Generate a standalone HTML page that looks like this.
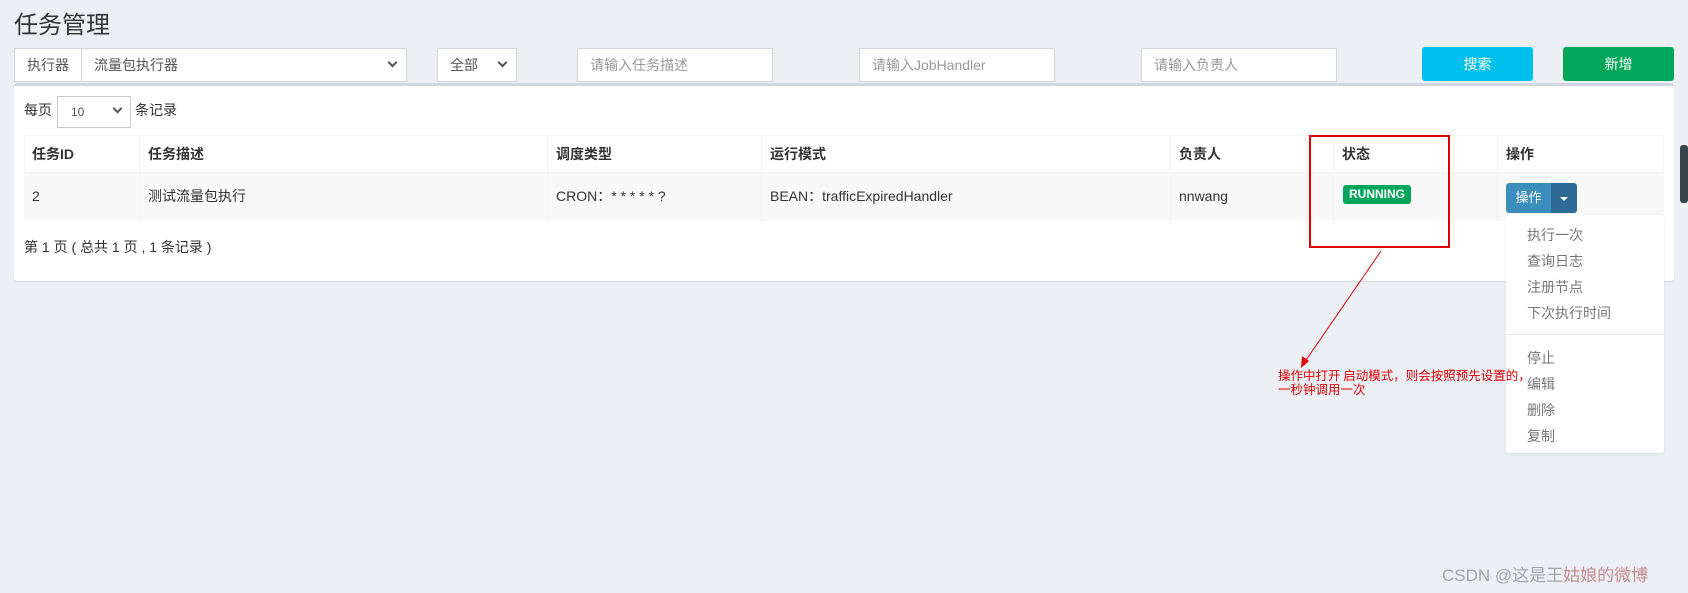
<!DOCTYPE html>
<html><head><meta charset="utf-8"><style>
*{box-sizing:border-box;margin:0;padding:0}
body{width:1688px;height:593px;background:#ecf0f5;font-family:"Liberation Sans","Noto Sans CJK SC",sans-serif;font-size:14px;color:#333;position:relative;overflow:hidden}
.a{position:absolute}
.inp{position:absolute;top:48px;height:34px;background:#fff;border:1px solid #d2d6de;color:#999;font-size:14px;line-height:32px;padding-left:12px}
.btn{position:absolute;top:47px;height:34px;color:#fff;text-align:center;line-height:34px;border-radius:3px;font-size:14px}
.car{position:absolute;width:7px;height:7px;border-right:2px solid #555;border-bottom:2px solid #555;transform:rotate(45deg)}
.th{position:absolute;top:136px;height:36px;line-height:36px;font-weight:bold;padding-left:8px;border-left:1px solid #f4f4f4}
.td{position:absolute;top:172px;height:49px;line-height:48px;padding-left:8px;border-left:1px solid #f4f4f4}
.dd{position:absolute;left:1527px;color:#777;font-size:14px}
</style></head><body>
<div class="a" style="left:14px;top:5px;font-size:24px;color:#333">任务管理</div>

<div class="inp" style="left:14px;width:68px;color:#555;background:#fff">执行器</div>
<div class="inp" style="left:81px;width:326px;color:#555">流量包执行器</div>
<div class="car" style="left:389px;top:59px"></div>
<div class="inp" style="left:437px;width:80px;color:#555">全部</div>
<div class="car" style="left:499px;top:59px"></div>
<div class="inp" style="left:577px;width:196px">请输入任务描述</div>
<div class="inp" style="left:859px;width:196px">请输入JobHandler</div>
<div class="inp" style="left:1141px;width:196px">请输入负责人</div>
<div class="btn" style="left:1422px;width:111px;background:#00c0ef">搜索</div>
<div class="btn" style="left:1563px;width:111px;background:#00a65a">新增</div>

<div class="a" style="left:14px;top:83px;width:1660px;height:198px;background:#fff;border-top:3px solid #d2d6de;border-radius:3px;box-shadow:0 1px 1px rgba(0,0,0,.1)"></div>
<div class="a" style="left:24px;top:100px">每页</div>
<div class="a" style="left:57px;top:96px;width:74px;height:32px;border:1px solid #ccc;background:#fff;font-size:12px;color:#555;line-height:30px;padding-left:13px">10</div>
<div class="car" style="left:114px;top:105px"></div>
<div class="a" style="left:135px;top:100px">条记录</div>

<div class="a" style="left:24px;top:135px;width:1640px;height:86px;border:1px solid #f4f4f4"></div>
<div class="a" style="left:24px;top:172px;width:1640px;height:49px;background:#f9f9f9;border-top:2px solid #f4f4f4"></div>
<div class="th" style="left:24px;border:none">任务ID</div>
<div class="th" style="left:139px">任务描述</div>
<div class="th" style="left:547px">调度类型</div>
<div class="th" style="left:761px">运行模式</div>
<div class="th" style="left:1170px">负责人</div>
<div class="th" style="left:1333px">状态</div>
<div class="th" style="left:1497px">操作</div>
<div class="td" style="left:24px;border:none">2</div>
<div class="td" style="left:139px">测试流量包执行</div>
<div class="td" style="left:547px">CRON：* * * * * ?</div>
<div class="td" style="left:761px">BEAN：trafficExpiredHandler</div>
<div class="td" style="left:1170px">nnwang</div>
<div class="td" style="left:1333px;width:164px"></div>
<div class="td" style="left:1497px;width:167px"></div>
<div class="a" style="left:1343px;top:185px;width:68px;height:19px;background:#00a65a;color:#fff;font-weight:bold;font-size:12px;text-align:center;line-height:19px;border-radius:3px">RUNNING</div>
<div class="a" style="left:1506px;top:183px;width:45px;height:30px;background:#3c8dbc;color:#fff;font-size:13px;line-height:30px;text-align:center;border-radius:3px 0 0 3px">操作</div>
<div class="a" style="left:1551px;top:183px;width:26px;height:30px;background:#2d6a96;border-radius:0 3px 3px 0"></div>
<div class="a" style="left:1560px;top:197px;border-left:4px solid transparent;border-right:4px solid transparent;border-top:4px solid #fff"></div>
<div class="a" style="left:24px;top:237px">第 1 页 ( 总共 1 页 , 1 条记录 )</div>

<div class="a" style="left:1506px;top:215px;width:158px;height:238px;background:#fff;border-radius:3px;box-shadow:0 1px 3px rgba(0,0,0,.08)"></div>
<div class="dd" style="top:225px">执行一次</div>
<div class="dd" style="top:251px">查询日志</div>
<div class="dd" style="top:277px">注册节点</div>
<div class="dd" style="top:303px">下次执行时间</div>
<div class="a" style="left:1506px;top:334px;width:158px;height:1px;background:#e5e5e5"></div>
<div class="dd" style="top:348px">停止</div>
<div class="dd" style="top:374px">编辑</div>
<div class="dd" style="top:400px">删除</div>
<div class="dd" style="top:426px">复制</div>

<div class="a" style="left:1309px;top:135px;width:141px;height:113px;border:2px solid #e00000"></div>
<svg class="a" style="left:0;top:0" width="1688" height="593"><line x1="1381" y1="251" x2="1304" y2="363" stroke="#e00000" stroke-width="1"/><polygon points="1301,368 1302,356 1309,361" fill="#e00000"/></svg>
<div class="a" style="left:1278px;top:368px;color:#e00000;font-size:12.5px;line-height:14px;font-family:'Noto Sans CJK SC',sans-serif">操作中打开 启动模式，则会按照预先设置的，<br>一秒钟调用一次</div>

<div class="a" style="left:1680px;top:145px;width:8px;height:58px;background:#3a444c;border-radius:3px"></div>
<div class="a" style="left:1442px;top:561px;font-size:17px;color:#a0a4a8">CSDN @这是王<span style="color:#c98a90">姑娘的微博</span></div>
</body></html>
